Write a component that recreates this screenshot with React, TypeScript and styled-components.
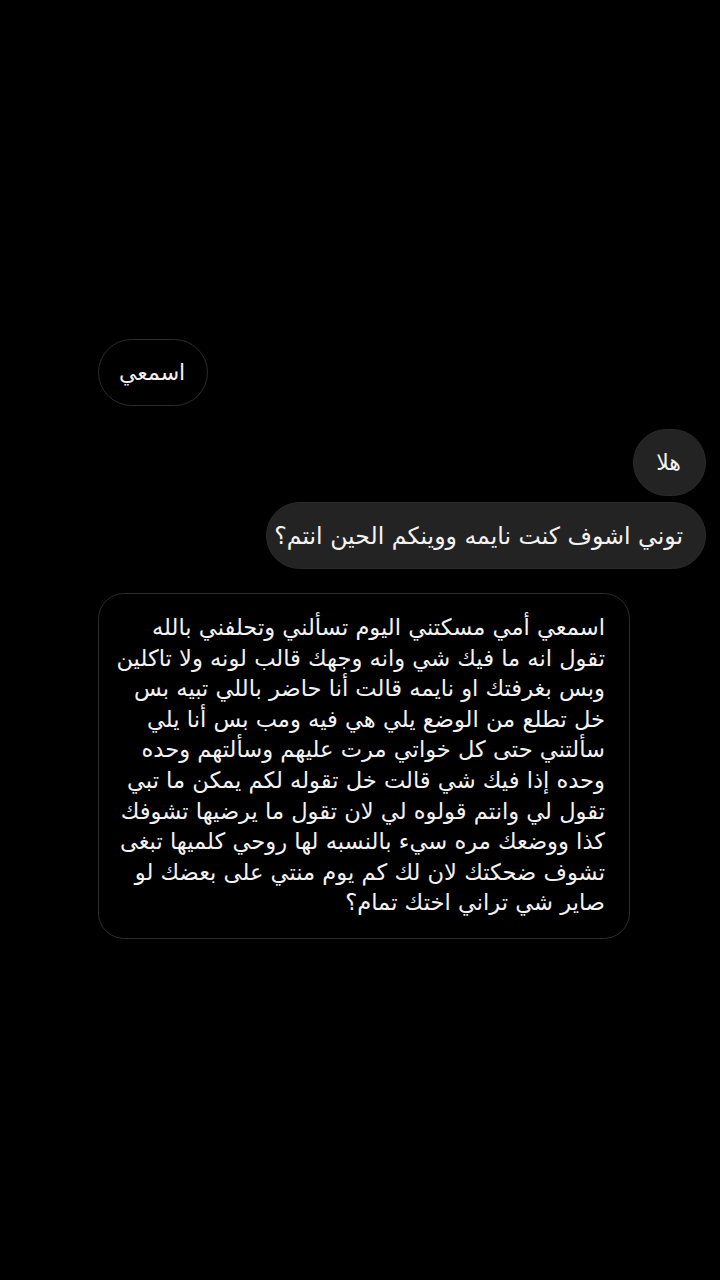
import React from "react";
import styled, { createGlobalStyle } from "styled-components";

const Global = createGlobalStyle`
  html, body { margin: 0; padding: 0; background: #000; }
  body { font-family: "DejaVu Sans", "Noto Sans", sans-serif; }
`;

const Screen = styled.div`
  width: 720px;
  min-height: 1280px;
  background: #000;
  display: flex;
  flex-direction: column;
  padding-top: 339px;
  box-sizing: border-box;
`;

const Row = styled.div<{ $side: "left" | "right"; $gap: number }>`
  display: flex;
  justify-content: ${(p) => (p.$side === "left" ? "flex-start" : "flex-end")};
  padding: 0 14px 0 98px;
  margin-top: ${(p) => p.$gap}px;
`;

const Pill = styled.div<{ $filled?: boolean; $size?: number }>`
  direction: rtl;
  height: 67px;
  box-sizing: border-box;
  display: flex;
  align-items: center;
  justify-content: center;
  padding: 0 22px 0 ${(p) => (p.$size ? 7 : 20)}px;
  min-width: 73px;
  border-radius: 34px;
  color: #f2f2f2;
  font-size: ${(p) => p.$size ?? 22}px;
  white-space: nowrap;
  background: ${(p) => (p.$filled ? "#232323" : "#000")};
  border: 1.5px solid ${(p) => (p.$filled ? "#2a2a2a" : "#2c2c2c")};
`;

const Card = styled.div`
  direction: rtl;
  width: 532px;
  box-sizing: border-box;
  border: 1.5px solid #2c2c2c;
  border-radius: 26px;
  background: #000;
  padding: 18px 24px 20px 14px;
  color: #f2f2f2;
  font-size: 22.6px;
  line-height: 30.6px;
  text-align: right;
`;

const Line = styled.div`
  white-space: nowrap;
`;

const lines = [
  "اسمعي أمي مسكتني اليوم تسألني وتحلفني بالله",
  "تقول انه ما فيك شي وانه وجهك قالب لونه ولا تاكلين",
  "وبس بغرفتك او نايمه قالت أنا حاضر باللي تبيه بس",
  "خل تطلع من الوضع يلي هي فيه ومب بس أنا يلي",
  "سألتني حتى كل خواتي مرت عليهم وسألتهم وحده",
  "وحده إذا فيك شي قالت خل تقوله لكم يمكن ما تبي",
  "تقول لي وانتم قولوه لي لان تقول ما يرضيها تشوفك",
  "كذا ووضعك مره سيء بالنسبه لها روحي كلميها تبغى",
  "تشوف ضحكتك لان لك كم يوم منتي على بعضك لو",
  "صاير شي تراني اختك تمام؟",
];

export default function App() {
  return (
    <>
      <Global />
      <Screen>
        <Row $side="left" $gap={0}>
          <Pill>اسمعي</Pill>
        </Row>
        <Row $side="right" $gap={23}>
          <Pill $filled>هلا</Pill>
        </Row>
        <Row $side="right" $gap={6}>
          <Pill $filled $size={23.6}>
            توني اشوف كنت نايمه ووينكم الحين انتم؟
          </Pill>
        </Row>
        <Row $side="left" $gap={24}>
          <Card>
            {lines.map((l, i) => (
              <Line key={i}>{l}</Line>
            ))}
          </Card>
        </Row>
      </Screen>
    </>
  );
}
